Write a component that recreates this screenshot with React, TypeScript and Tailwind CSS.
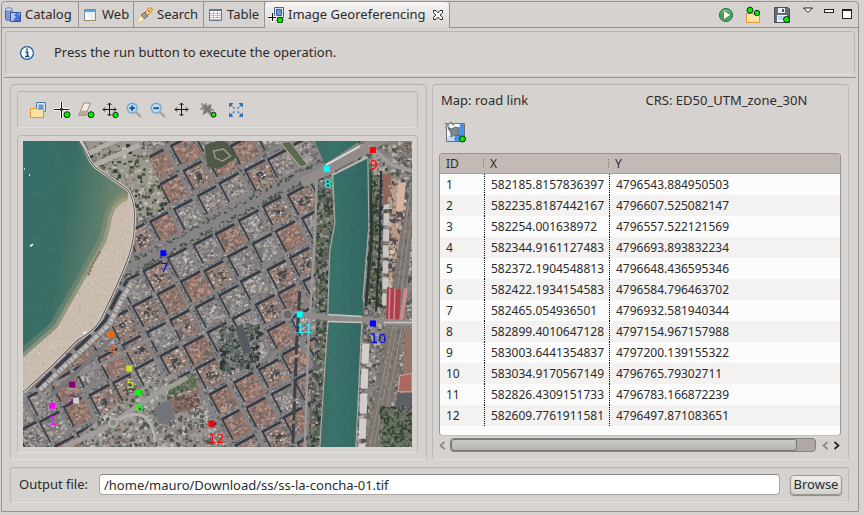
import type { ReactNode } from "react";

type Shape = [color: string, d: string];

/* ---------- Aerial photo ---------- */

let seed = 7;
const rnd = () => {
  seed = (seed * 1664525 + 1013904223) % 4294967296;
  return seed / 4294967296;
};
const pick = <T,>(list: T[]): T => list[Math.floor(rnd() * list.length)];
const box = (x: number, y: number, w: number, h: number) =>
  `M${x.toFixed(1)} ${y.toFixed(1)}h${w.toFixed(1)}v${h.toFixed(1)}h${(-w).toFixed(1)}z`;

function collect() {
  const store = new Map<string, string[]>();
  return {
    add(color: string, d: string) {
      const list = store.get(color) ?? [];
      list.push(d);
      store.set(color, list);
    },
    done: (): Shape[] => [...store].map(([c, l]) => [c, l.join("")]),
  };
}

const ROOFS = [
  ["#8d7a74", "#a28378", "#796b66", "#ad8e80", "#6b6765", "#aaa49f"],
  ["#8f8987", "#a9a39f", "#757374", "#bfb9b4", "#93807a", "#5f5f64"],
  ["#93746a", "#ae8272", "#7d6a64", "#a89c96", "#6a6362", "#b9998b"],
  ["#827f80", "#9a9592", "#afaba8", "#66676d", "#89776f", "#cbc7c2"],
];

function buildStreets() {
  const shadow = collect();
  const roof = collect();
  const rows: number[] = [];
  for (let v = 141; v > -60; v -= 28) rows.push(v);
  for (let v = 182; v < 470; v += 28) rows.push(v);
  for (const v of rows) {
    for (let u = 192 - 27 * 13; u < 400; u += 27) {
      const x = u - 11.5 + rnd() * 3;
      const y = v - 11.5 + rnd() * 3;
      const w = 19.5 + rnd() * 3;
      const h = 20.5 + rnd() * 3;
      shadow.add("#363a44", box(x - 1.6, y - 2.6, w + 0.8, h + 1));
      const colors = pick(ROOFS);
      roof.add(colors[0], box(x, y, w, h));
      for (let i = 0; i < 110; i++) {
        const s = 0.8 + rnd() * 2.6;
        const t = 0.8 + rnd() * 2;
        roof.add(pick(colors), box(x + rnd() * (w - s), y + rnd() * (h - t), s, t));
      }
      for (let i = 0; i < 10; i++) {
        roof.add(
          pick(["#3d4049", "#4a4b50", "#565452"]),
          box(x + 5 + rnd() * 8, y + 6 + rnd() * 8, 1.2 + rnd() * 3, 1 + rnd() * 2.2),
        );
      }
      for (let i = 0; i < 13; i++) {
        roof.add(pick(["#d8d3ce", "#c9c3be", "#e2deda"]), box(x + rnd() * (w - 2), y + rnd() * (h - 2), 0.8 + rnd() * 1.6, 0.8 + rnd()));
      }
      for (let i = 0; i < 7; i++) {
        roof.add(pick(["#45474e", "#54514f"]), box(x + rnd() * (w - 2), y + rnd() * (h - 2), 1 + rnd() * 2, 1));
      }
      // cars and trees along the kerbs
      for (let i = 0; i < 14; i++) {
        roof.add(pick(["#53584f", "#46504a", "#b9b8b8", "#65676d"]), box(x - 5 + rnd() * 2, y + rnd() * 26, 1.3, 1.3));
        roof.add(pick(["#53584f", "#46504a", "#b9b8b8", "#65676d"]), box(x + rnd() * 26, y - 6 + rnd() * 2, 1.3, 1.3));
      }
    }
  }
  // planted boulevard between the two halves of the grid
  for (let i = 0; i < 480; i++) {
    const side = rnd() > 0.5 ? 154 : 164;
    roof.add(pick(["#4b5547", "#59614f", "#3d483f", "#8b8a83"]), box(-40 + rnd() * 370, side + rnd() * 4, 2, 1.6));
  }
  return [...shadow.done(), ...roof.done()];
}

function scatter(n: number, x0: number, x1: number, y0: number, y1: number, colors: string[], size = 1.6): Shape[] {
  const c = collect();
  for (let i = 0; i < n; i++) {
    const w = size * (0.5 + rnd());
    const h = size * (0.5 + rnd());
    c.add(pick(colors), box(x0 + rnd() * (x1 - x0), y0 + rnd() * (y1 - y0), w, h));
  }
  return c.done();
}

const GREENS = ["#3c4a3b", "#4d5947", "#2f3d35", "#66705a", "#7d7f70"];
const streets = buildStreets();
const water = scatter(1500, 0, 120, 0, 220, ["#41796f", "#4f8478", "#2f6961", "#578677"], 0.9);
const sand = scatter(2400, 0, 115, 50, 260, ["#d3c5b7", "#bcab9c", "#ddd1c6", "#b0a193"], 1);
const river = scatter(1400, 285, 350, 0, 306, ["#33655f", "#437a72", "#2f5c57", "#4a7f76"], 0.9);
const garden = scatter(520, 70, 150, 0, 80, [...GREENS, "#b5aea5", "#a79f96", "#c5bfb7"], 2.6);
const rowsOfTrees = scatter(1700, 280, 320, 30, 306, [...GREENS, "#8e8b88", "#2d3637", "#a8a39e"], 2.4);
const eastBank = scatter(2800, 330, 390, 0, 306, ["#8d8885", "#a39d99", "#6d6b6c", "#b9b2ab", "#56585a", "#78695f", "#4c554b"], 2.6);
const eastTrees = scatter(500, 343, 357, 30, 165, GREENS, 2.4);
const tanRoofs = scatter(360, 364, 378, 38, 150, ["#b79a88", "#c9ae9b", "#8c6f62", "#544f52", "#d0c2b5"], 3.6);
const tracks = scatter(900, 340, 390, 50, 306, ["#7f7772", "#968e88", "#645f5e"], 1.6);
const plaza = scatter(1300, 60, 190, 235, 306, ["#a5a09b", "#8a8785", "#6f6e70", "#c0bbb6", "#52584e", "#7a6a63"], 2.6);
const church = scatter(300, 196, 234, 182, 226, ["#353f3a", "#44504a", "#5d6762", "#7c7f80", "#2b3131"], 3);
const woods = scatter(500, 355, 390, 264, 306, GREENS, 2.6);
const schoolRoof = scatter(160, 147, 174, 252, 270, ["#9b7b6e", "#7c6259", "#a89387", "#5b504e"], 2.4);
const park = scatter(180, 144, 172, 232, 252, ["#4a6042", "#3a4d38", "#5f7050", "#7c7e6c"], 2.4);

const Fill = ({ shapes }: { shapes: Shape[] }) => (
  <>
    {shapes.map(([c, d]) => (
      <path key={c} fill={c} d={d} />
    ))}
  </>
);

const points = [
  { id: "1", x: 29, y: 264, color: "#ff00ff", dx: 1 },
  { id: "2", x: 49, y: 243, color: "#800080", dx: 0 },
  { id: "", x: 53, y: 259, color: "#d0d0d0", dx: 0 },
  { id: "4", x: 88, y: 193, color: "#ff6600", dx: 1 },
  { id: "5", x: 106, y: 227, color: "#c3e620", dx: 1 },
  { id: "6", x: 115, y: 251, color: "#00ff00", dx: 1 },
  { id: "7", x: 140, y: 112, color: "#0000ff", dx: 1 },
  { id: "8", x: 303, y: 28, color: "#00ffff", dx: 1 },
  { id: "9", x: 349, y: 9, color: "#ff0000", dx: 1 },
  { id: "10", x: 349, y: 182, color: "#0000ff", dx: 5 },
  { id: "11", x: 276, y: 173, color: "#00ffff", dx: 5 },
  { id: "12", x: 188, y: 282, color: "#ff0000", dx: 5 },
];

const SHORE = "C64 10 66 22 72 26L105 49C110 58 112 70 111 82C111 96 108 108 105 116C98 136 90 152 77 179C70 190 62 194 54 199L27 226L2 249L0 250";

function AerialMap() {
  return (
    <svg viewBox="0 0 388 305" className="block w-full" role="img" aria-label="Aerial image with control points">
      <defs>
        <linearGradient id="sea" x1="0" y1="0.1" x2="1" y2="0.4">
          <stop offset="0" stopColor="#347069" />
          <stop offset="0.4" stopColor="#3b6e65" />
          <stop offset="0.7" stopColor="#617f6d" />
          <stop offset="1" stopColor="#948f74" />
        </linearGradient>
        <linearGradient id="stream" x1="0" y1="0" x2="1" y2="0">
          <stop offset="0" stopColor="#3f6a63" />
          <stop offset="0.4" stopColor="#3a736c" />
          <stop offset="1" stopColor="#316560" />
        </linearGradient>
        <clipPath id="seaClip">
          <path d="M0 0H57C64 10 66 22 72 26L105 49L104 59C96 62 92 67 90 72C86 84 86 94 82 102L65 132L50 158L34 186L0 216Z" />
        </clipPath>
        <clipPath id="sandClip"><path d={`M0 0H57${SHORE}Z`} /></clipPath>
        <clipPath id="riverClip">
          <path d="M291 0H336L301 23ZM308 34L344 15C348 30 347 60 344 86L339 158V174H304L306 100C312 82 312 60 308 34ZM305 180H338L332 306H296Z" />
        </clipPath>
        <clipPath id="treeClip"><path d="M292 36L307 34L310 82L305 110L303 306H284L292 190Z" /></clipPath>
        <clipPath id="trackClip"><path d="M388 40V90L380 190L360 306H342L362 185L376 95Z" /></clipPath>
        <clipPath id="gardenClip"><path d="M62 0H120L146 68L114 80L110 50L76 26Z" /></clipPath>
        <clipPath id="plazaClip"><path d="M60 290L118 245L150 232L184 262L190 306H60Z" /></clipPath>
        <clipPath id="eastClip"><path d="M336 0H388V306H332L338 174L346 86Z" /></clipPath>
        <clipPath id="schoolClip"><path d="M146 258L173 248L178 264L152 272Z" /></clipPath>
        <clipPath id="parkClip"><path d="M143 242L170 230L174 246L146 254Z" /></clipPath>
      </defs>
      <path fill="#868384" d="M0 0H388V306H0Z" />
      <g transform="rotate(-28)"><Fill shapes={streets} /></g>

      {/* public gardens and squares */}
      <g clipPath="url(#gardenClip)">
        <path fill="#9a968e" d="M60 0H150V90H60Z" />
        <Fill shapes={garden} />
      </g>
      <path d="M66 12L104 -6M72 24L116 4" stroke="#b3aea9" strokeWidth="5" fill="none" />
      <path fill="#4e5a47" d="M181 4L200 -2L214 16L196 28L184 26Z" />
      <path d="M190 10L200 8L207 15L199 20L192 17Z" fill="none" stroke="#a29c8c" strokeWidth="1.4" />
      <path fill="#5d6a52" d="M257 2L266 0L284 24L277 26Z" stroke="#aaa69f" />
      <Fill shapes={church} />
      <path d="M211 186L219 182L229 210L220 214Z" fill="#565a60" stroke="#7f8285" strokeWidth="1.2" strokeDasharray="2 2" />
      <g clipPath="url(#plazaClip)">
        <path fill="#96928e" d="M50 220H200V306H50Z" />
        <Fill shapes={plaza} />
      </g>
      <path fill="#73757a" d="M130 267L147 257L152 277L136 283Z" />
      <g clipPath="url(#parkClip)"><Fill shapes={park} /></g>
      <g clipPath="url(#schoolClip)">
        <path fill="#8d6f64" d="M140 240H182V280H140Z" />
        <Fill shapes={schoolRoof} />
      </g>
      <path d="M0 251C30 243 74 228 110 205L160 183" stroke="#8d8b8b" strokeWidth="3" fill="none" />
      <path d="M40 306L82 286L130 254L164 236" stroke="#a09e9c" strokeWidth="5" fill="none" />
      <path d="M96 278C120 264 130 280 132 300" stroke="#b4b1ad" strokeWidth="3" fill="none" />
      <circle cx="90" cy="281" r="4" fill="#858987" stroke="#b4b1ad" strokeWidth="2" />

      {/* row of houses behind the promenade */}
      <path d="M14 250L34 230L60 206L84 182L96 158L106 140" stroke="#8b8a8b" strokeWidth="12" fill="none" />
      <path d="M13 246L34 225L60 201L82 179L94 155L104 139" stroke="#3a3e48" strokeWidth="3.5" fill="none" strokeDasharray="22 5" />
      <path d="M17 248L38 228L64 204L86 183L98 159L108 142" stroke="#c0bbb7" strokeWidth="4" fill="none" strokeDasharray="3 1 5 2 2 1" />
      <path d="M19 251L40 231L66 207L88 186" stroke="#83736c" strokeWidth="2.5" fill="none" strokeDasharray="5 2 3 1" />
      <path d="M26 256L50 234L76 210L92 192" stroke="#77777c" strokeWidth="4" fill="none" />

      {/* bay and beach */}
      <g clipPath="url(#sandClip)">
        <path fill="#cabcae" d="M0 0H120V260H0Z" />
        <Fill shapes={sand} />
      </g>
      <g clipPath="url(#seaClip)">
        <path fill="url(#sea)" d="M0 0H115V220H0Z" />
        <g opacity="0.6"><Fill shapes={water} /></g>
        <path d="M104 59C96 62 92 67 90 72C86 84 86 94 82 102L65 132L50 158L34 186L0 216" stroke="#a99e80" strokeWidth="16" fill="none" opacity="0.3" />
        <path d="M104 59C96 62 92 67 90 72C86 84 86 94 82 102L65 132L50 158L34 186L0 216" stroke="#b9aa8c" strokeWidth="7" fill="none" opacity="0.5" />
      </g>
      <path d={`M57 0${SHORE}`} stroke="#d4cec6" strokeWidth="3" fill="none" />
      <path d={`M55 0${SHORE}`} stroke="#5f5c58" strokeWidth="1" fill="none" />
      <path d="M77 110L70 122L65 134" stroke="#847463" strokeWidth="2" strokeDasharray="3 1" fill="none" />
      <path d="M7 105L10 103M1 28H2M6 34H7M60 192L63 190" stroke="#f1f3f0" strokeWidth="1.6" />

      {/* east bank */}
      <path fill="#85817f" d="M336 0H388V306H332L338 174L346 86Z" />
      <g clipPath="url(#eastClip)"><Fill shapes={eastBank} /></g>
      <Fill shapes={eastTrees} />
      <path d="M346 30L348 90L342 165" stroke="#30383a" strokeWidth="3" fill="none" />
      <path d="M357 30L356 100L352 170" stroke="#2f3339" strokeWidth="2" fill="none" />
      <path d="M363 56L361 165" stroke="#c9c5c1" strokeWidth="6" strokeDasharray="12 4" fill="none" />
      <path d="M342 202L338 306" stroke="#d2cecb" strokeWidth="7" strokeDasharray="20 5" fill="none" />
      <path fill="#8f6658" d="M359 33L367 32L366 62L359 64Z" />
      <Fill shapes={tanRoofs} />
      <path fill="#d5b4a0" d="M374 42L382 41L379 70L372 70Z" />
      <g clipPath="url(#trackClip)">
        <path fill="#7c7570" d="M330 40H388V306H330Z" />
        <Fill shapes={tracks} />
        <path d="M388 70L372 190L350 306M386 50L368 190L346 306M392 80L377 190L356 306" stroke="#9d9791" strokeWidth="0.8" fill="none" />
      </g>
      <path fill="#a8404f" d="M363 146L377 148L375 182L362 180Z" />
      <path d="M366 147L365 181M371 147L370 181" stroke="#d9898e" strokeWidth="1.5" />
      <path d="M382 147L377 180" stroke="#c98b8d" strokeWidth="4" />
      <path fill="#957567" d="M381 186H388V233H379Z" />
      <path fill="#a86a5e" d="M376 234L388 232V250L374 250Z" stroke="#d8a496" />
      <path fill="#5d6066" d="M374 251H388V266L371 265Z" />
      <path fill="#404b3d" d="M362 270L388 266V306H356Z" />
      <Fill shapes={woods} />
      <path d="M358 290L388 268M372 306L388 292" stroke="#6e7068" strokeWidth="2" />

      {/* river, banks and bridges */}
      <g clipPath="url(#treeClip)">
        <path fill="#62665f" d="M280 30H320V306H280Z" />
        <Fill shapes={rowsOfTrees} />
      </g>
      <path d="M293 40L291 100L285 190L281 306" stroke="#9a9896" strokeWidth="2.5" fill="none" />
      <path d="M276 150L273 200L269 306" stroke="#3d414b" strokeWidth="3" fill="none" strokeDasharray="19 3" />
      <g clipPath="url(#riverClip)">
        <path fill="url(#stream)" d="M285 0H350V306H285Z" />
        <g opacity="0.7"><Fill shapes={river} /></g>
      </g>
      <path d="M309 34L311 82L306 110L304 172M304 180L296 306M344 18L345 86L339 158M338 180L332 306" stroke="#a9a8a2" strokeWidth="1.2" fill="none" />
      <path d="M278 42L345 6L362 -4" stroke="#928d8b" strokeWidth="10" fill="none" />
      <path d="M302 24L336 5" stroke="#dedad6" strokeWidth="2" />
      <path d="M308 34L344 16" stroke="#bdb8b4" strokeWidth="2" />
      <path d="M345 4L368 24L388 30M350 10L352 34" stroke="#a09c99" strokeWidth="4" fill="none" />
      <path d="M276 173L304 176L338 178L364 180L388 182" stroke="#8e8b89" strokeWidth="6" fill="none" />
      <path d="M304 173L338 175M304 180L338 181M360 181H388" stroke="#cac6c2" strokeWidth="1.5" />
      <circle cx="264" cy="173" r="5" fill="#696b69" stroke="#929191" strokeWidth="2" />

      {points.map((p) => (
        <g key={`${p.x}-${p.y}`} fill={p.color}>
          <path d={box(p.x - 3, p.y - 3, 6, 6)} />
          {p.id && (
            <text x={p.x + p.dx} y={p.y + 19} textAnchor="middle" fontSize="13" fontFamily="'DejaVu Sans', sans-serif">
              {p.id}
            </text>
          )}
        </g>
      ))}
    </svg>
  );
}

/* ---------- Icons ---------- */

const Svg = ({ children, size = 16 }: { children: ReactNode; size?: number }) => (
  <svg viewBox={`0 0 ${size} ${size}`} width={size} height={size} className="shrink-0" aria-hidden="true">
    {children}
  </svg>
);
const Dot = ({ x, y, r = 2.7 }: { x: number; y: number; r?: number }) => (
  <circle cx={x} cy={y} r={r} fill="#00f000" stroke="#111" strokeWidth="0.9" />
);
const Folder = () => (
  <path d="M1.5 7.5V16.5H14.5V8.5H9L7.5 7.5Z" fill="#fbe3a0" stroke="#e0963a" />
);

const CatalogIcon = () => (
  <Svg>
    <path d="M.5 2.5V12C1 14 6 14 7 12V2.5Z" fill="#7d9bd0" stroke="#4a62a8" />
    <ellipse cx="3.8" cy="2.5" rx="3.3" ry="1.7" fill="#d5dff2" stroke="#6a80b8" />
    <path d="M5.5 5.5H15.5V14.5H5.5Z" fill="#4474d0" stroke="#3450a4" />
    <path d="M6 6H11L9 9H11L8 14H6Z" fill="#b8c4ef" />
    <path d="M12 6L15 9V6Z" fill="#8aaef0" />
  </Svg>
);
const WebIcon = () => (
  <Svg>
    <path d="M2.5 2.5H13.5V13.5H2.5Z" fill="#fff" stroke="#718bab" />
    <path d="M3 3H13V5H3Z" fill="#5fa7d8" />
    <path d="M3 5L13 5V13H9Z" fill="#e7f0f3" />
    <path d="M2 13.5H14" stroke="#9d905c" />
  </Svg>
);
const SearchIcon = () => (
  <Svg>
    <path d="M7 6L12 1L15 1L15 4L10 9Z" fill="#fbd27c" stroke="#c98630" />
    <path d="M4 8L8 5L11 9L7 12Z" fill="#a59a91" stroke="#776c68" />
    <path d="M4 9L7 12L4 15H0Z" fill="#fff6c0" stroke="#e3b96d" strokeWidth="0.7" />
    <circle cx="12" cy="4" r="0.9" fill="#765" />
  </Svg>
);
const TableIcon = () => (
  <Svg>
    <path d="M2.5 2.5H14.5V13.5H2.5Z" fill="#fff" stroke="#68788c" />
    <path d="M2 2H15V4H2Z" fill="#68788c" />
    <path d="M3 6.5H14M3 8.5H14M3 10.5H14M3 12.5H14M6.5 4V13M10.5 4V13" stroke="#a4b0bd" strokeWidth="0.8" />
  </Svg>
);
const GeoIcon = () => (
  <Svg>
    <path d="M6.5 .5H15.5V10.5H6.5Z" fill="#d6e6f8" stroke="#45689c" />
    <path d="M8.5 2.5H13.5V8.5H8.5Z" fill="#6c9bd4" stroke="#3b5f95" />
    <path d="M4.5 5V15M0 10H9" stroke="#fff" strokeWidth="2.4" />
    <path d="M4.5 6V14M0 10.5H8" stroke="#111" strokeWidth="1.1" />
    <Dot x={12} y={13.2} r={2.9} />
  </Svg>
);
const CloseIcon = () => (
  <Svg size={12}>
    <path d="M1.5 1.5H4L6 3.8L8 1.5H10.5V3.5L8.2 6L10.5 8.5V10.5H8L6 8.2L4 10.5H1.5V8.5L3.8 6L1.5 3.5Z" fill="#fff" stroke="#222" />
  </Svg>
);
const PlayIcon = () => (
  <Svg>
    <circle cx="8" cy="8" r="6.6" fill="#4aa05c" stroke="#2f7d4a" />
    <path d="M3.5 5.5A5.5 5 0 0 1 12.5 5.5" stroke="#8fc99a" fill="none" />
    <path d="M6 4V12L12 8Z" fill="#fff" />
  </Svg>
);
const LoadIcon = () => (
  <Svg size={18}>
    <Folder />
    <Dot x={5} y={4.2} r={3} />
    <Dot x={12} y={7} />
  </Svg>
);
const SaveIcon = () => (
  <Svg>
    <path d="M.5 .5H14L15.5 2V15.5H.5Z" fill="#666a72" stroke="#4c5058" />
    <path d="M4 1H11V6H4Z" fill="#e9ebee" />
    <path d="M8 2H10V5H8Z" fill="#50555e" />
    <path d="M3 8H13V15H3Z" fill="#eef2fb" />
    <path d="M4 10H12M4 12H12" stroke="#91aee2" />
    <Dot x={12.5} y={12.5} r={3} />
  </Svg>
);
const InfoIcon = () => (
  <Svg>
    <circle cx="8" cy="8" r="6.4" fill="#fff" stroke="#1d5f9c" strokeWidth="1.3" />
    <path d="M8 3.6V5.4M6.5 7H8.5V11.5M6 11.5H10.5" stroke="#11538f" strokeWidth="1.7" fill="none" />
  </Svg>
);
const OpenImageIcon = () => (
  <Svg size={18}>
    <path d="M7.5 1.5H16.5V10.5H7.5Z" fill="#d9e8f7" stroke="#5379aa" />
    <path d="M9.5 3.5H14.5V8.5H9.5Z" fill="#6796cd" />
    <Folder />
  </Svg>
);
const CrossIcon = () => (
  <Svg size={18}>
    <path d="M8.5 1V17M1 8.5H16" stroke="#fff" strokeWidth="3" />
    <path d="M8.5 1V17M1 8.5H16" stroke="#111" />
    <circle cx="8.5" cy="8.5" r="1.7" fill="#333" />
    <Dot x={14} y={13.7} r={3} />
  </Svg>
);
const EraserIcon = () => (
  <Svg size={18}>
    <path d="M7 2H13.5L8.5 14.5H1.5Z" fill="#f5ecdf" stroke="#9c8a76" />
    <path d="M4 9.5H10.5L8.5 14.5H1.5Z" fill="#b9a893" />
    <Dot x={14} y={13.7} r={3} />
  </Svg>
);
const arrows = "M8.5 2.5V14.5M2.5 8.5H14.5M6.5 4L8.5 2L10.5 4M6.5 13L8.5 15L10.5 13M4 6.5L2 8.5L4 10.5M13 6.5L15 8.5L13 10.5";
const MoveIcon = ({ dot = false }: { dot?: boolean }) => (
  <Svg size={18}>
    <path d={arrows} stroke="#111" fill="none" />
    {dot && <Dot x={14.5} y={14} />}
  </Svg>
);
const ZoomIcon = ({ plus = false }: { plus?: boolean }) => (
  <Svg size={18}>
    <path d="M10.5 10.5L16 16" stroke="#a5a29e" strokeWidth="2.2" />
    <circle cx="7.2" cy="7.2" r="5" fill="#b5dcf4" stroke="#78a6cd" strokeWidth="1.4" />
    <path d={plus ? "M4.5 7.2H10M7.2 4.5V10" : "M4.5 7.2H10"} stroke="#124f8c" strokeWidth="1.8" />
  </Svg>
);
const DeleteIcon = () => (
  <Svg size={18}>
    <path d="M2 2L5 4L7 2L8 5L12 3L11 7L15 9L11 10L12 14L8 11L4 14L5 9L1 8L4 6Z" fill="#8b8a88" stroke="#9a9896" />
    <path d="M5 5L12 12M12 5L5 12" stroke="#71706e" strokeWidth="1.6" />
    <Dot x={14.5} y={13.7} r={2.5} />
  </Svg>
);
const FitIcon = () => (
  <Svg size={18}>
    <path d="M7.5 7.5L3 3M10.5 7.5L15 3M7.5 10.5L3 15M10.5 10.5L15 15" stroke="#3771a9" strokeWidth="1.3" strokeDasharray="2 1" />
    <path d="M2 6.5V2H6.5ZM11.5 2H16V6.5ZM2 11.5V16H6.5ZM11.5 16H16V11.5Z" fill="#2f70ad" />
  </Svg>
);
const ClearMapIcon = () => (
  <Svg size={24}>
    <path d="M3.5 3.5H21.5V21.5H3.5Z" fill="#f4f8fc" stroke="#68727a" />
    <path d="M21 4V16L16 21H10L12 15L16 9L17 4Z" fill="#4b92e0" />
    <path d="M4 17L8 15L12 21H4Z" fill="#c3dcf5" />
    <path d="M1.500 3L5 5L8 2L10 5L12 3M2 8L5 6L7 9" stroke="#8c908a" strokeWidth="1.4" fill="none" />
    <path d="M5 8L9 9L12 7L16 8L14 12L17 16L12 15L8 17L8 13Z" fill="#84878a" stroke="#64686a" />
    <Dot x={19.5} y={19} r={3} />
  </Svg>
);

/* ---------- Widgets ---------- */

const etched =
  "rounded border border-t-[#b6b2ae] border-l-[#bcb8b4] border-r-[#bcb8b4] border-b-[#e2dfdc]";

const IconButton = ({ label, children, className = "w-6" }: { label: string; children: ReactNode; className?: string }) => (
  <button type="button" aria-label={label} className={`flex h-6 items-center justify-center ${className}`}>
    {children}
  </button>
);

const tabs = [
  { name: "Catalog", icon: <CatalogIcon />, width: "w-[77px]" },
  { name: "Web", icon: <WebIcon />, width: "w-[55px]" },
  { name: "Search", icon: <SearchIcon />, width: "w-[70px]" },
  { name: "Table", icon: <TableIcon />, width: "w-[61px]" },
];

const rows = [
  ["1", "582185.8157836397", "4796543.884950503"],
  ["2", "582235.8187442167", "4796607.525082147"],
  ["3", "582254.001638972", "4796557.522121569"],
  ["4", "582344.9161127483", "4796693.893832234"],
  ["5", "582372.1904548813", "4796648.436595346"],
  ["6", "582422.1934154583", "4796584.796463702"],
  ["7", "582465.054936501", "4796932.581940344"],
  ["8", "582899.4010647128", "4797154.967157988"],
  ["9", "583003.6441354837", "4797200.139155322"],
  ["10", "583034.9170567149", "4796765.79302711"],
  ["11", "582826.4309151733", "4796783.166872239"],
  ["12", "582609.7761911581", "4796497.871083651"],
];

function TabBar() {
  return (
    <header className="flex h-[26px] shrink-0">
      <div role="tablist" className="flex">
        {tabs.map((t) => (
          <button
            key={t.name}
            role="tab"
            aria-selected="false"
            className={`flex items-center gap-1 border-r border-b border-[#96928e] pl-[3px] whitespace-nowrap ${t.width}`}
          >
            {t.icon}
            {t.name}
          </button>
        ))}
        <div className="flex w-[185px] items-center gap-1.5 rounded-t-sm border-r border-[#96928e] bg-linear-to-b from-[#f8f7f6] to-[#d6d2cf] pl-[3px]">
          <button role="tab" aria-selected="true" className="flex items-center gap-1 whitespace-nowrap">
            <GeoIcon />
            Image Georeferencing
          </button>
          <button type="button" aria-label="Close"><CloseIcon /></button>
        </div>
      </div>
      <div className="flex flex-1 items-center justify-end border-b border-[#96928e] pr-1.5">
        <IconButton label="Run" className="w-7"><PlayIcon /></IconButton>
        <IconButton label="Load marks" className="w-7"><LoadIcon /></IconButton>
        <IconButton label="Save marks" className="w-7"><SaveIcon /></IconButton>
        <div className="flex items-start gap-2 self-stretch pt-1 pl-1">
          <button type="button" aria-label="View menu" className="w-4">
            <svg width="12" height="8" viewBox="0 0 12 8" className="mx-auto"><path d="M1.5 2H10.5L6 6.5Z" fill="#fff" stroke="#222" /></svg>
          </button>
          <button type="button" aria-label="Minimize" className="pt-[3px]">
            <span className="block h-1 w-[10px] border border-[#222] bg-white" />
          </button>
          <button type="button" aria-label="Maximize" className="pt-[3px]">
            <span className="block h-[10px] w-[10px] border border-t-2 border-[#222] bg-white" />
          </button>
        </div>
      </div>
    </header>
  );
}

const Chevron = ({ flip = false, color }: { flip?: boolean; color: string }) => (
  <svg width="7" height="9" viewBox="0 0 7 9" aria-hidden="true">
    <path d={flip ? "M1.5 1L5.5 4.5L1.5 8" : "M5.5 1L1.5 4.5L5.5 8"} stroke={color} strokeWidth="1.7" fill="none" />
  </svg>
);

function Coordinates() {
  return (
    <section className={`${etched} flex min-w-0 flex-col px-[6px] pb-[6px]`}>
      <div className="grid grid-cols-2 pt-[5px] pl-[2px] leading-5">
        <span>Map: road link</span>
        <span className="pl-1">CRS: ED50_UTM_zone_30N</span>
      </div>
      <div className="flex h-[43px] items-center pl-1">
        <button type="button" aria-label="Clear marks"><ClearMapIcon /></button>
      </div>
      <div className="mr-[1px] flex-1 overflow-hidden rounded border border-[#989290] border-b-[#c4bfbb] bg-[#fcfcfc] text-xs">
        <table className="w-full table-fixed border-separate border-spacing-0 text-left">
          <thead>
            <tr className="h-[20px] bg-[#c3b9b6]">
              {["ID", "X", "Y"].map((h, i) => (
                <th
                  key={h}
                  scope="col"
                  className={`border-b border-[#aaa19e] p-0 pl-[6px] font-normal ${["w-[44px]", "w-[125px]", ""][i]}`}
                >
                  <span className="relative">
                    {h}
                    {i > 0 && <span className="absolute top-1 -left-[7px] h-[9px] border-l border-dotted border-[#857c79]" />}
                  </span>
                </th>
              ))}
            </tr>
          </thead>
          <tbody>
            {rows.map((r) => (
              <tr key={r[0]} className="h-[21px] odd:bg-[#fcfcfc] even:bg-[#f3f2f0]">
                <td className="p-0 pl-[6px]">{r[0]}</td>
                <td className="border-l border-dotted border-black p-0 pl-[6px]">{r[1]}</td>
                <td className="border-l border-dotted border-black p-0 pl-[6px]">{r[2]}</td>
              </tr>
            ))}
          </tbody>
        </table>
      </div>
      <div className="mt-[2px] mr-[2px] flex h-[15px] items-center gap-1">
        <button type="button" aria-label="Scroll left"><Chevron color="#8c8885" /></button>
        <div className="flex h-[14px] flex-1 rounded border border-[#85807c] bg-[#b0a8a5]">
          <div className="w-[95%] rounded-[3px] border border-[#7a7773] bg-linear-to-b from-[#cccbc7] to-[#b5b4b0]" />
        </div>
        <button type="button" aria-label="Page left" className="ml-[2px]"><Chevron color="#8c8885" /></button>
        <button type="button" aria-label="Scroll right"><Chevron flip color="#222" /></button>
      </div>
    </section>
  );
}

export default function App() {
  return (
    <div className="min-h-screen bg-[#d6d2cf] pt-px pr-[5px] pb-1 pl-px font-['Noto_Sans',sans-serif] text-[13px] text-[#2b2b2b]">
      <div className="rounded-t border border-[#96928e]">
        <TabBar />
        <main>
          <div className={`${etched} mx-[3px] mt-[3px] flex h-[44px] items-center gap-[19px] pl-[13px]`}>
            <InfoIcon />
            <p>Press the run button to execute the operation.</p>
          </div>
          <div className="mx-[2px] mt-[2px] border-t border-[#96928e] pt-[6px] pr-[7px] pb-[8px] pl-[6px]">
            <div className="grid grid-cols-2 gap-[5px]">
              <section className={`${etched} flex min-w-0 flex-col gap-[7px] p-[6px] pr-2`}>
                <div role="toolbar" className={`${etched} flex h-[37px] items-center pl-2`}>
                  <IconButton label="Open image"><OpenImageIcon /></IconButton>
                  <IconButton label="Add mark"><CrossIcon /></IconButton>
                  <IconButton label="Erase mark"><EraserIcon /></IconButton>
                  <IconButton label="Move mark"><MoveIcon dot /></IconButton>
                  <IconButton label="Zoom in"><ZoomIcon plus /></IconButton>
                  <IconButton label="Zoom out"><ZoomIcon /></IconButton>
                  <IconButton label="Pan"><MoveIcon /></IconButton>
                  <IconButton label="Delete marks" className="w-7"><DeleteIcon /></IconButton>
                  <IconButton label="Fit to view" className="w-7"><FitIcon /></IconButton>
                </div>
                <div className={`${etched} p-[5px]`}>
                  <AerialMap />
                </div>
              </section>
              <Coordinates />
            </div>
            <form className={`${etched} mt-[7px] flex h-[36px] items-center pr-[6px] pl-2`} onSubmit={(e) => e.preventDefault()}>
              <label htmlFor="output" className="w-20 shrink-0">Output file:</label>
              <input
                id="output"
                type="text"
                defaultValue="/home/mauro/Download/ss/ss-la-concha-01.tif"
                className="h-[21px] min-w-0 flex-1 rounded border border-[#aaa6a2] border-t-[#8b8784] bg-white px-1 outline-none"
              />
              <button
                type="button"
                className="ml-[10px] h-[20px] w-[52px] rounded border border-[#9b9793] bg-linear-to-b from-[#f0efed] to-[#d3d0cc] leading-none shadow-[0_1px_1px_#8b8784]"
              >
                Browse
              </button>
            </form>
          </div>
        </main>
      </div>
    </div>
  );
}
